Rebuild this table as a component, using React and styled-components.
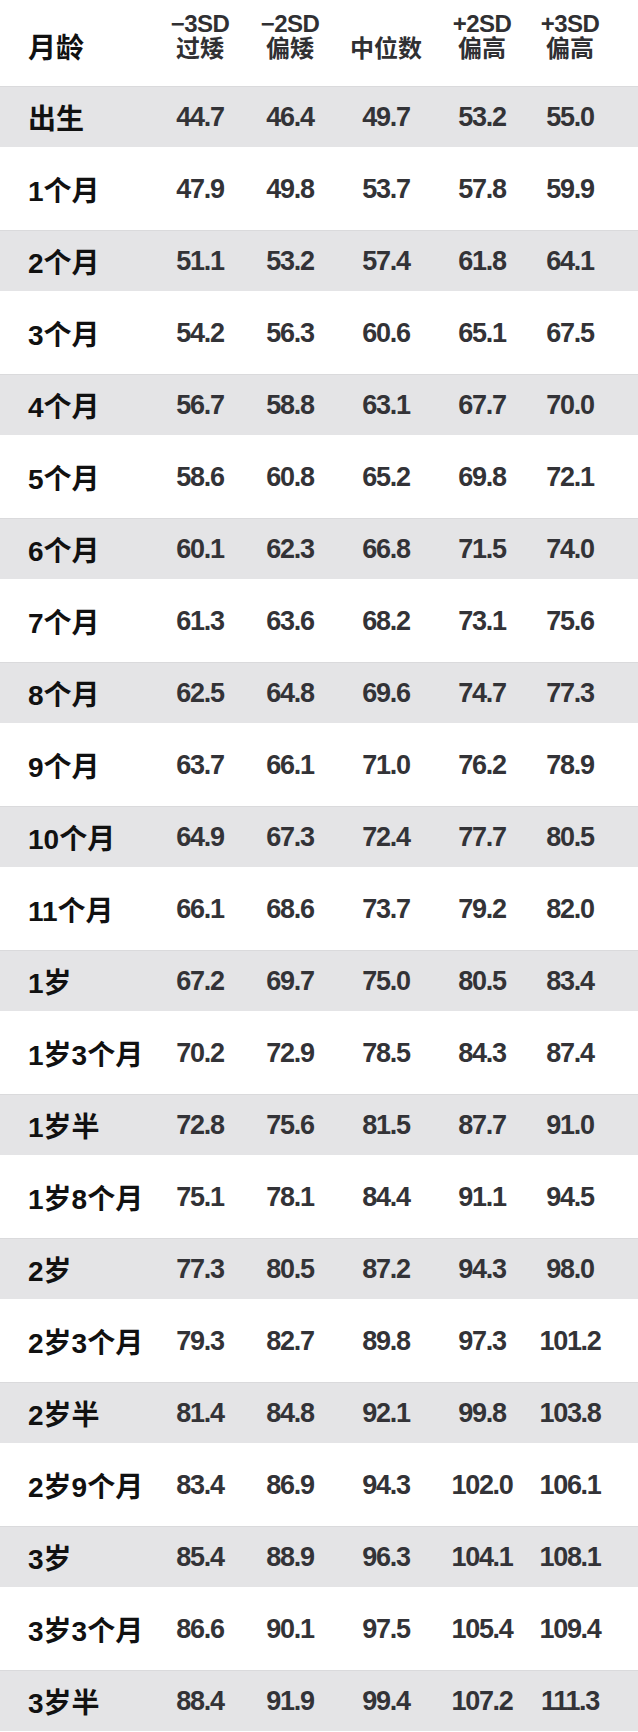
import styled, { createGlobalStyle } from "styled-components";

const GlobalStyle = createGlobalStyle`
  html, body {
    margin: 0;
    padding: 0;
    background: #ffffff;
  }
  body {
    font-family: "Liberation Sans", "Noto Sans CJK SC", sans-serif;
  }
`;

const COLUMNS = "155px 90px 90px 102px 90px 86px 1fr";

const ROWS = [
  ["出生", "44.7", "46.4", "49.7", "53.2", "55.0"],
  ["1个月", "47.9", "49.8", "53.7", "57.8", "59.9"],
  ["2个月", "51.1", "53.2", "57.4", "61.8", "64.1"],
  ["3个月", "54.2", "56.3", "60.6", "65.1", "67.5"],
  ["4个月", "56.7", "58.8", "63.1", "67.7", "70.0"],
  ["5个月", "58.6", "60.8", "65.2", "69.8", "72.1"],
  ["6个月", "60.1", "62.3", "66.8", "71.5", "74.0"],
  ["7个月", "61.3", "63.6", "68.2", "73.1", "75.6"],
  ["8个月", "62.5", "64.8", "69.6", "74.7", "77.3"],
  ["9个月", "63.7", "66.1", "71.0", "76.2", "78.9"],
  ["10个月", "64.9", "67.3", "72.4", "77.7", "80.5"],
  ["11个月", "66.1", "68.6", "73.7", "79.2", "82.0"],
  ["1岁", "67.2", "69.7", "75.0", "80.5", "83.4"],
  ["1岁3个月", "70.2", "72.9", "78.5", "84.3", "87.4"],
  ["1岁半", "72.8", "75.6", "81.5", "87.7", "91.0"],
  ["1岁8个月", "75.1", "78.1", "84.4", "91.1", "94.5"],
  ["2岁", "77.3", "80.5", "87.2", "94.3", "98.0"],
  ["2岁3个月", "79.3", "82.7", "89.8", "97.3", "101.2"],
  ["2岁半", "81.4", "84.8", "92.1", "99.8", "103.8"],
  ["2岁9个月", "83.4", "86.9", "94.3", "102.0", "106.1"],
  ["3岁", "85.4", "88.9", "96.3", "104.1", "108.1"],
  ["3岁3个月", "86.6", "90.1", "97.5", "105.4", "109.4"],
  ["3岁半", "88.4", "91.9", "99.4", "107.2", "111.3"],
];

const HEADS = [
  ["−3SD", "过矮"],
  ["−2SD", "偏矮"],
  [null, "中位数"],
  ["+2SD", "偏高"],
  ["+3SD", "偏高"],
];

const Table = styled.div`
  width: 638px;
  display: flex;
  flex-direction: column;
`;

const HeaderRow = styled.div`
  display: grid;
  grid-template-columns: ${COLUMNS};
  align-items: end;
  box-sizing: border-box;
  height: 80px;
  padding-bottom: 22px;
`;

const AgeHead = styled.div`
  padding-left: 28px;
  font-family: "Noto Sans CJK SC", sans-serif;
  font-weight: 700;
  font-size: 28px;
  line-height: 23px;
  color: #111111;
`;

const ColHead = styled.div`
  display: flex;
  flex-direction: column;
  align-items: center;
  gap: 1px;
  color: #303033;
  font-weight: 700;
`;

const HeadCode = styled.span`
  font-family: "Liberation Sans", sans-serif;
  font-size: 24px;
  line-height: 22px;
  letter-spacing: -0.5px;
`;

const HeadName = styled.span`
  font-family: "Noto Sans CJK SC", sans-serif;
  font-size: 24px;
  line-height: 22px;
`;

const Row = styled.div`
  box-sizing: border-box;
  height: 72px;
  padding: 6px 0 5px;
`;

const Band = styled.div`
  display: grid;
  grid-template-columns: ${COLUMNS};
  align-items: center;
  box-sizing: border-box;
  height: 61px;
  background: ${(p) => (p.$shaded ? "#e4e4e6" : "transparent")};
  border-top: 1px solid ${(p) => (p.$shaded ? "#dadadc" : "transparent")};
`;

const Age = styled.div`
  padding-left: 28px;
  font-family: "Liberation Sans", "Noto Sans CJK SC", sans-serif;
  font-weight: 700;
  font-size: 28px;
  color: #111111;
  white-space: nowrap;
`;

const Value = styled.div`
  text-align: center;
  font-family: "Liberation Sans", sans-serif;
  font-weight: 700;
  font-size: 27px;
  letter-spacing: -1.3px;
  color: #333337;
`;

export default function App() {
  return (
    <>
      <GlobalStyle />
      <Table>
        <HeaderRow>
          <AgeHead>月龄</AgeHead>
          {HEADS.map(([code, name], i) => (
            <ColHead key={i}>
              {code && <HeadCode>{code}</HeadCode>}
              <HeadName>{name}</HeadName>
            </ColHead>
          ))}
          <div />
        </HeaderRow>
        {ROWS.map(([age, ...values], i) => (
          <Row key={age}>
            <Band $shaded={i % 2 === 0}>
              <Age>{age}</Age>
              {values.map((v, j) => (
                <Value key={j}>{v}</Value>
              ))}
              <div />
            </Band>
          </Row>
        ))}
      </Table>
    </>
  );
}
